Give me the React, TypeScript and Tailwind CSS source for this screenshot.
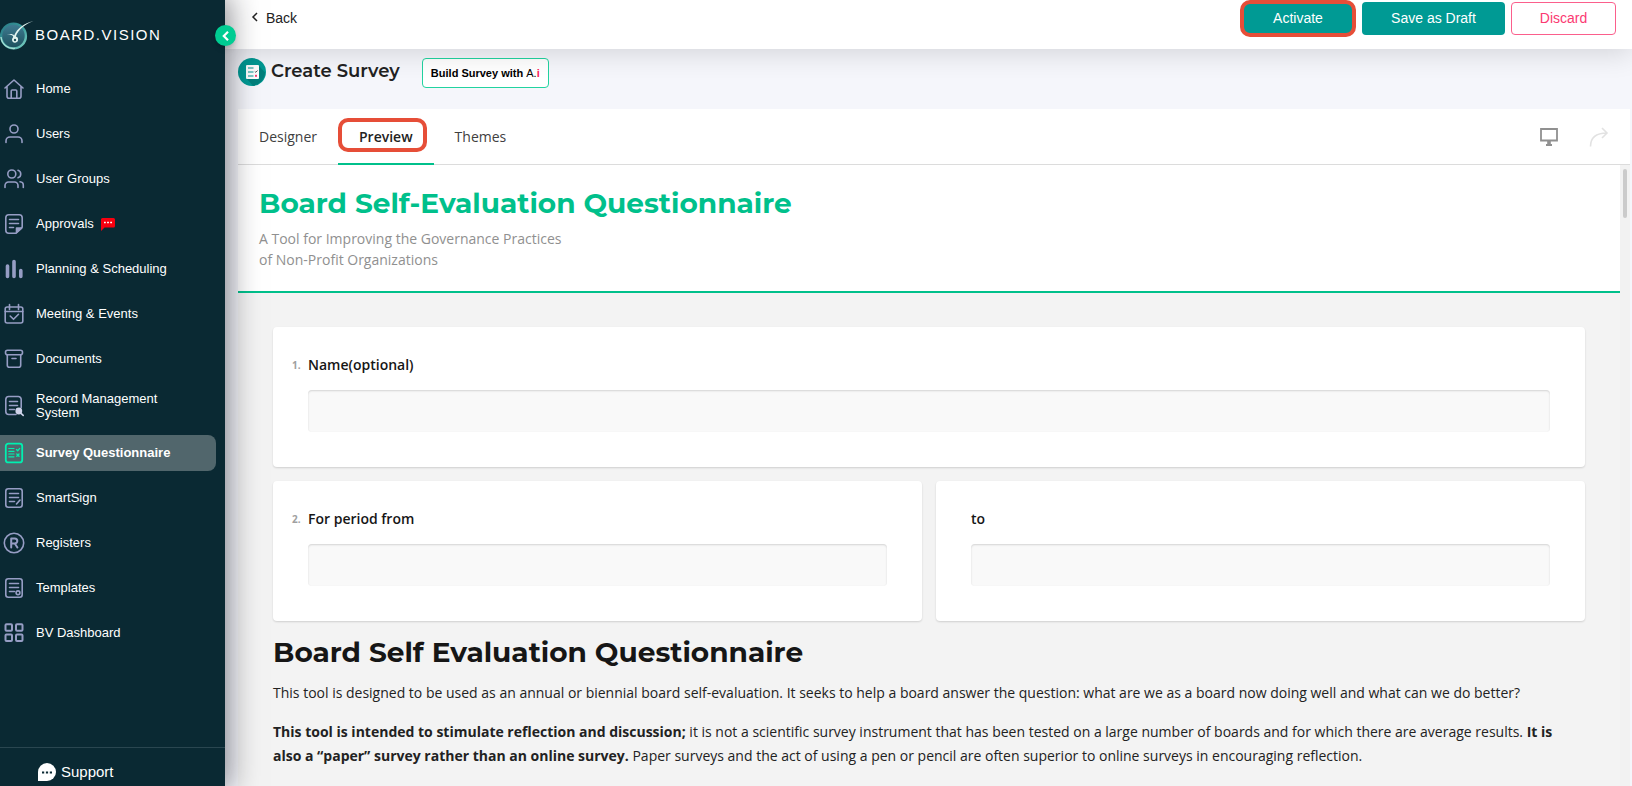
import React, { useState } from 'react'

interface NavItem {
  name: string;
  icon: React.ReactNode;
  badge?: boolean;
  tall?: boolean;
}

// rounded sheet with the three text lines, shared by the document style icons
const Sheet = ({ children }: { children?: React.ReactNode }) => (
  <>
    <rect x='1.8' y='0.8' width='16.4' height='18.4' rx='2.5' />
    <path d='M5.5 5.500h9M5.500 9.500h9M5.500 13.500h5' />
    {children}
  </>
)

const navItems: NavItem[] = [
  { name: 'Home', icon: <path d='M1 9 10 1l9 8M3 7.500v9.700a2 2 0 0 0 2 2h10a2 2 0 0 0 2-2V7.500M7.200 19v-7a1 1 0 0 1 1-1h3.600a1 1 0 0 1 1 1v7' /> },
  { name: 'Users', icon: <><circle cx='10' cy='5' r='4' /><path d='M2 18.500v-1.500a4 4 0 0 1 4-4h8a4 4 0 0 1 4 4v1.500' /></> },
  { name: 'User Groups', icon: <><circle cx='7.8' cy='5' r='4' /><path d='M1 18.500v-2A3.500 3.500 0 0 1 4.500 13h6a3.500 3.500 0 0 1 3.500 3.500v2M14 1.200a4 4 0 0 1 0 7.600M16 12.700a3.600 3.600 0 0 1 3.300 3.800v2' /></> },
  {
    name: 'Approvals',
    badge: true,
    icon: <><path d='M12 19.200H4.800a3 3 0 0 1-3-3V3.800a3 3 0 0 1 3-3h10.400a3 3 0 0 1 3 3v9.300l-6.200 6.100ZM5.500 5.500h9M5.500 9.500h9M5.500 13.500h4' /><path d='M12.500 18.600v-4.500h5.200Z' fill='currentColor' /></>,
  },
  { name: 'Planning & Scheduling', icon: <path d='M3.500 7v10.500M10 2.500v15M16.800 11.500v6' strokeWidth='3.600' /> },
  { name: 'Meeting & Events', icon: <><rect x='1.2' y='3' width='17.6' height='16' rx='2' /><path d='M5.500.5v5M14.500.5v5M1.200 7.500h17.600M6.200 12l3.300 3.300 5-5' /></> },
  { name: 'Documents', icon: <><rect x='1.5' y='1.3' width='17' height='4.4' rx='2' /><path d='M3.300 6v10.200a2 2 0 0 0 2 2h9.400a2 2 0 0 0 2-2V6M8 9.500h4' /></> },
  {
    name: 'Record Management System',
    tall: true,
    icon: <><path d='M12 18.500H4.800a3 3 0 0 1-3-3V3.500a3 3 0 0 1 3-3h9.400a3 3 0 0 1 3 3v8M5.500 5.500h8M5.500 9.500h8M5.500 13.500h5' /><circle cx='14.8' cy='15' r='2.600' fill='#cfd3ea' stroke='#cfd3ea' /><path d='m17 17.400 2.200 2' stroke='#cfd3ea' /></>,
  },
  { name: 'Survey Questionnaire', icon: <><rect x='1.8' y='0.6' width='16.400' height='18.800' rx='2.500' strokeWidth='1.800' /><path d='M4.800 5.500H10M4.800 8.300H10M4.800 11H10M4.800 13.800H10' strokeWidth='1.200' /><path d='m12.500 6.500 1.200 1.200 2-2.300M12.800 11l2.200 2.200M15 11l-2.200 2.200' strokeWidth='1.300' /></> },
  { name: 'SmartSign', icon: <Sheet><path d='m12.500 16 3.500-4' /></Sheet> },
  { name: 'Registers', icon: <><circle cx='10' cy='10' r='9.700' /><path d='M7.200 14.500V5.500h3.600a2.500 2.500 0 0 1 0 5H7.200M10.800 10.500l2.600 4' strokeWidth='2' /></> },
  { name: 'Templates', icon: <Sheet><circle cx='14' cy='14.800' r='1.900' /></Sheet> },
  { name: 'BV Dashboard', icon: <g strokeWidth='2'><rect x='1.500' y='1.200' width='6.500' height='6.500' rx='1' /><rect x='12' y='1.200' width='6.500' height='6.500' rx='1' /><rect x='1.500' y='11.500' width='6.500' height='6.500' rx='1' /><rect x='12' y='11.500' width='6.500' height='6.500' rx='1' /></g> },
]

const Logo = () => (
  <svg className='w-[35px] h-8 shrink-0' viewBox='0 2 35 32' fill='none'>
    <defs>
      <linearGradient id='ring' x1='0' y1='0' x2='1' y2='1'>
        <stop offset='0' stopColor='#2b7a86' />
        <stop offset='0.5' stopColor='#36999a' />
        <stop offset='1' stopColor='#7fd0c4' />
      </linearGradient>
      <linearGradient id='disc' x1='0' y1='0' x2='0' y2='1'>
        <stop offset='0' stopColor='#407d94' />
        <stop offset='1' stopColor='#1d4f5c' />
      </linearGradient>
    </defs>
    <circle cx='13.500' cy='18' r='12.400' fill='url(#disc)' stroke='url(#ring)' strokeWidth='2.400' />
    <path d='M1 19a12.500 12.500 0 0 0 14 11.400' stroke='#a9ded4' strokeWidth='1.400' />
    <path d='M33.500 3C25 6.500 18.500 11 15.800 18.500c1.900.3 2.600 2 2.200 4-.8 3-6 3-6-.8 0-1.500 1.200-2.200 1.200-3.200-.8-1.400-2.400-1.900-6.400-1.900 3.400-1.200 6.200-.8 7.400.8C17 10.500 24 5.500 33.500 3Z' fill='#e3f4f0' />
    <circle cx='15' cy='22' r='1.200' fill='#1d4f5c' />
  </svg>
)

const Sidebar: React.FC = () => {
  const [active, setActive] = useState<string>('Survey Questionnaire')

  return (
    <aside className='relative z-20 flex w-[225px] shrink-0 flex-col bg-[#0a2933] text-white shadow-[0_0_28px_4px_rgba(20,20,30,0.5)]'>
      <div className='flex h-[71px] items-center'>
        <Logo />
        <span className='text-[15px] tracking-widest'>BOARD.VISION</span>
      </div>
      <button aria-label='Collapse menu' className='absolute -right-[11px] top-[25px] flex size-[21px] items-center justify-center rounded-full bg-[#00cc92] shadow-md'>
        <svg className='size-3' viewBox='0 0 12 12' fill='none' stroke='#fff' strokeWidth='2.2'><path d='M8 1.800 3.800 6 8 10.200' /></svg>
      </button>

      <nav className='flex flex-1 flex-col gap-[9px]'>
        {
          navItems.map((item) => (
            <button
              key={item.name}
              onClick={() => setActive(item.name)}
              className={`mr-[9px] flex shrink-0 items-center rounded-r-lg pl-1 text-left text-[13px] leading-[14px] ${item.tall ? 'h-10' : 'h-9'} ${active === item.name ? 'bg-[#51666c] font-bold' : ''}`}
            >
              <svg
                className={`mr-3 size-5 shrink-0 overflow-visible ${active === item.name ? 'text-[#00f0b0]' : 'text-[#969dc4]'}`}
                viewBox='0 0 20 20'
                fill='none'
                stroke='currentColor'
                strokeWidth='1.6'
                strokeLinecap='round'
                strokeLinejoin='round'
              >
                {item.icon}
              </svg>
              <span className='max-w-[140px]'>{item.name}</span>
              {item.badge && (
                <svg className='ml-[7px] h-[14px] w-[14px]' viewBox='0 0 14 14'>
                  <path d='M1.500 1h11a1.500 1.500 0 0 1 1.500 1.500v6.500a1.500 1.500 0 0 1-1.500 1.500H3.500L0 14V2.500A1.500 1.500 0 0 1 1.500 1Z' fill='#f8000f' />
                  <path d='M3 5.500h1.800M6.100 5.500h1.800M9.200 5.500H11' stroke='#fff' strokeWidth='1.600' />
                </svg>
              )}
            </button>
          ))
        }
      </nav>

      <div className='flex h-[39px] items-end border-t border-[#2a4650] pl-[38px]'>
        <a href='#support' className='flex items-center gap-[5px] pb-[5px] text-[15px] leading-[18px]'>
          <svg className='size-[18px]' viewBox='0 0 18 18'>
            <path d='M9 0a9 9 0 1 1 0 18H0V9a9 9 0 0 1 9-9Z' fill='#fff' />
            <path d='M4 9.500h2.200M7.900 9.500h2.200M11.800 9.500H14' stroke='#0a2933' strokeWidth='1.800' />
          </svg>
          Support
        </a>
      </div>
    </aside>
  )
}

interface QuestionProps {
  id: string;
  label: string;
  no?: string;
}

const Question = ({ id, label, no }: QuestionProps) => (
  <div className='min-w-0 flex-1 rounded bg-white px-[35px] pt-[27px] pb-[35px] shadow-[0_1px_2px_rgba(0,0,0,0.15)]'>
    <div className='relative mb-[14px] flex items-center'>
      {no && <span className='absolute -left-4 text-[10px] font-bold text-[#a0a0a0]'>{no}</span>}
      <label htmlFor={id} className='text-sm leading-[22px] font-semibold text-[#161616]'>{label}</label>
    </div>
    <input id={id} type='text' className='block h-[42px] w-full rounded bg-[#f9f9f9] px-3 text-sm shadow-[inset_0_1px_2px_rgba(0,0,0,0.15)] outline-none' />
  </div>
)

const tabs = ['Designer', 'Preview', 'Themes']

const App: React.FC = () => {
  const [tab, setTab] = useState<string>('Preview')

  return (
    <div className="flex h-screen overflow-hidden bg-[#f5f6fb] font-['Liberation_Sans',Arial,sans-serif]">
      <Sidebar />

      <div className='flex min-w-0 flex-1 flex-col'>
        <header className='relative z-10 flex h-[49px] shrink-0 items-start justify-between bg-white pr-4 pl-[26px] shadow-[0_4px_28px_rgba(0,0,0,0.14)]'>
          <a href='#back' className='flex h-[35px] items-center gap-[7px] text-sm text-[#222]'>
            <svg className='mb-0.5 h-2.5 w-2' viewBox='0 0 8 10' fill='none' stroke='#222' strokeWidth='1.500'><path d='M6 1 2 5l4 4' /></svg>
            Back
          </a>
          <div className='flex items-center gap-1.5 text-sm'>
            <button className='h-[37px] w-[116px] rounded-[10px] border-4 border-[#e64e38] bg-[#009a94] pb-0.5 text-white'>Activate</button>
            <button className='h-[33px] w-[143px] rounded bg-[#009a94] pb-0.5 text-white'>Save as Draft</button>
            <button className='h-[33px] w-[105px] rounded border border-[#fb5f8c] bg-white pb-0.5 text-[#fb3a72]'>Discard</button>
          </div>
        </header>

        <div className='flex h-[60px] shrink-0 items-start pt-[9px] pl-[13px]'>
          <svg className='size-7' viewBox='0 0 28 28'>
            <circle cx='14' cy='14' r='14' fill='#009a94' />
            <path d='m21 8 6 6.500a14 14 0 0 1-12 13.300L9 21Z' fill='#00807c' />
            <rect x='8' y='7' width='13' height='14' rx='1' fill='#fff' />
            <path d='M10 10h5.500M10 14h5.500M10 18h5.500' stroke='#009a94' strokeWidth='1.200' />
            <path d='m16.800 13.500 1 .8 1.700-1.800' stroke='#555' fill='none' />
            <rect x='17' y='16.800' width='2' height='2' fill='#fb3a72' />
          </svg>
          <h1 className='ml-[5px] font-[Montserrat,Inter,sans-serif] text-lg leading-[26px] font-semibold text-[#222]'>Create Survey</h1>
          <button className='ml-[22px] h-[30px] w-[127px] rounded border border-[#22d3a0] bg-white text-[11px] font-bold whitespace-nowrap text-black'>
            Build Survey with <span className='font-normal'>A.<span className='font-bold text-[#fb1f5c]'>i</span></span>
          </button>
        </div>

        <main className="mr-0.5 ml-[13px] flex min-h-0 flex-1 flex-col bg-[#f3f3f3] font-['Open_Sans',sans-serif]">
          <div className='flex h-14 shrink-0 items-center justify-between border-b border-[#dcdcdc] bg-white pr-[21px]'>
            <div className='flex h-14 text-sm'>
              {
                tabs.map((name) => (
                  <button
                    key={name}
                    onClick={() => setTab(name)}
                    className={`relative border-b-2 px-[21px] pt-0.5 ${tab === name ? 'border-[#00c08b] font-semibold text-[#222]' : 'border-transparent text-[#404040]'}`}
                  >
                    {name}
                    {tab === name && <span className='absolute top-[9px] right-[7px] left-0 h-[34px] rounded-[10px] border-4 border-[#e64e38]'></span>}
                  </button>
                ))
              }
            </div>
            <div className='flex items-center gap-[31px]'>
              <button aria-label='Desktop view'>
                <svg className='size-[18px]' viewBox='0 0 18 18' fill='none'>
                  <path d='M1 1h16v11.500H1Z' stroke='#909090' strokeWidth='1.800' />
                  <path d='M7.200 13h3.600v3H12v2H6v-2h1.200Z' fill='#909090' />
                </svg>
              </button>
              <button aria-label='Redo' disabled>
                <svg className='size-5' viewBox='0 0 20 20' fill='none' stroke='#e2e2e2' strokeWidth='1.600'>
                  <path d='M1.500 19.500C1.500 11 7 6 18 6M13 1l5 5-5 5' />
                </svg>
              </button>
            </div>
          </div>

          <div className='flex min-h-0 flex-1'>
            <div className='min-w-0 flex-1 overflow-hidden'>
              <div className='border-b-2 border-[#00c08b] bg-white px-[21px] pt-[18px] pb-[21px]'>
                <h2 className='mb-[5px] font-[Montserrat,Inter,sans-serif] text-[28px] leading-10 font-bold text-[#00c08b]'>Board Self-Evaluation Questionnaire</h2>
                <p className='text-sm leading-[21px] text-[#909090]'>A Tool for Improving the Governance Practices<br />of Non-Profit Organizations</p>
              </div>

              <div className='px-[35px] pt-[34px]'>
                <div className='flex flex-col gap-[14px]'>
                  <Question id='name' label='Name(optional)' no='1.' />
                  <div className='flex gap-[14px]'>
                    <Question id='from' label='For period from' no='2.' />
                    <Question id='to' label='to' />
                  </div>
                </div>

                <div className='pt-[11px] pr-5 text-sm leading-6 text-[#222]'>
                  <h3 className='mb-[9px] font-[Montserrat,Inter,sans-serif] text-[28px] leading-10 font-bold text-[#161616]'>Board Self Evaluation Questionnaire</h3>
                  <p className='mb-[15px]'>This tool is designed to be used as an annual or biennial board self-evaluation. It seeks to help a board answer the question: what are we as a board now doing well and what can we do better?</p>
                  <p>
                    <strong>This tool is intended to stimulate reflection and discussion;</strong> it is not a scientific survey instrument that has been tested on a large number of boards and for which there are average results. <strong>It is also a “paper” survey rather than an online survey.</strong> Paper surveys and the act of using a pen or pencil are often superior to online surveys in encouraging reflection.
                  </p>
                </div>
              </div>
            </div>
            {/* scroll track */}
            <div className='flex w-2.5 shrink-0 justify-center bg-[#f2f2f2] pt-1'>
              <div className='h-[49px] w-1 rounded-full bg-[#cbcbcb]'></div>
            </div>
          </div>
        </main>
      </div>
    </div>
  )
}

export default App
